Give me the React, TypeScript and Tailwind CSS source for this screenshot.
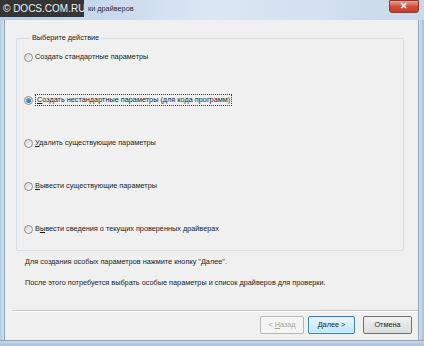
import React from "react";

function Radio({ checked }: { checked?: boolean }) {
  return (
    <span className="relative w-[9px] h-[9px] rounded-full border border-[#8e8f8f] bg-gradient-to-br from-[#d5d5d5] to-[#f8f8f8] flex items-center justify-center shrink-0">
      {checked && <span className="w-[5px] h-[5px] rounded-full bg-gradient-to-br from-[#7ab4d8] to-[#1f5f90]" />}
    </span>
  );
}

function Row({ checked, children }: { checked?: boolean; children: React.ReactNode }) {
  return (
    <div className="h-[12px] flex items-center gap-[2px]">
      <Radio checked={checked} />
      {checked ? (
        <span className="border border-dotted border-[#333] px-[1px] leading-[10px]">{children}</span>
      ) : (
        <span className="leading-[12px]">{children}</span>
      )}
    </div>
  );
}

export default function App() {
  return (
    <div
      className="w-[424px] h-[346px] flex flex-col bg-[#c6d6e8] text-[#1b1b1b] overflow-hidden"
      style={{ fontFamily: '"Liberation Sans", Arial, sans-serif' }}
    >
      {/* Title bar */}
      <div className="h-[20px] flex items-start bg-gradient-to-r from-[#b7cde5] via-[#dbe7f4] to-[#c9d9ea] shrink-0">
        <div className="w-[84px] h-[17px] bg-[#353535] text-[#f2f2f2] text-[10px] leading-[17px] pl-[3px] whitespace-nowrap overflow-hidden">
          © DOCS.COM.RU
        </div>
        <div className="text-[7.3px] leading-[18px] ml-[4px] text-[#1c2f45]">ки драйверов</div>
        <div className="flex-1" />
        <div className="w-[30px] h-[13px] mr-[5px] rounded-b-[3px] border border-[#8a3a32] bg-gradient-to-b from-[#e8a292] via-[#d0503e] to-[#c33d2a] flex items-center justify-center text-white text-[9px] font-bold leading-none">
          ✕
        </div>
      </div>

      <div className="flex flex-1">
        <div className="w-[5px] bg-gradient-to-r from-[#b8cbe0] to-[#d4e1ee] border-r border-[#8ea4bd]" />
        <div className="flex-1 bg-[#f0f0f0] flex flex-col text-[7.3px]">
          <fieldset className="ml-[11px] mr-[14px] mt-[13px] h-[218px] border border-[#d5dfe5] rounded-[2px] px-[8px]">
            <legend className="ml-[5px] px-[2px] leading-[10px]">Выберите действие</legend>
            <div className="flex flex-col gap-[31px] pt-[8px] -ml-[1px]">
              <Row>Создать стандартные параметры</Row>
              <Row checked>
                <u>С</u>оздать нестандартные параметры (для кода программ)
              </Row>
              <Row>
                <u>У</u>далить существующие параметры
              </Row>
              <Row>
                <u>В</u>ывести существующие параметры
              </Row>
              <Row>
                В<u>ы</u>вести сведения о текущих проверенных драйверах
              </Row>
            </div>
          </fieldset>
          <div className="ml-[20px] mt-[5px] leading-[12px]">Для создания особых параметров нажмите кнопку "Далее".</div>
          <div className="ml-[20px] mt-[9px] leading-[12px]">После этого потребуется выбрать особые параметры и список драйверов для проверки.</div>
          <div className="ml-[7px] mt-[21px] h-[1px] bg-[#c8c8c8] border-b border-white box-content" />
          <div className="flex justify-end mt-[4px] mr-[6px] gap-[4px]">
            <div className="w-[44px] h-[18px] rounded-[2px] border border-[#b5b8bb] bg-[#f4f4f4] text-[#a3a3a3] flex items-center justify-center">
              &lt; <u className="ml-[2px]">Н</u>азад
            </div>
            <div className="w-[47px] h-[18px] rounded-[2px] border border-[#3c7fb1] bg-gradient-to-b from-[#eaf6fd] to-[#bee6fd] shadow-[inset_0_0_0_1px_#d9f0fc] flex items-center justify-center">
              <u>Д</u>алее &gt;
            </div>
            <div className="w-[49px] h-[18px] ml-[4px] rounded-[2px] border border-[#707070] bg-gradient-to-b from-[#f2f2f2] to-[#dcdcdc] flex items-center justify-center">
              Отмена
            </div>
          </div>
        </div>
        <div className="w-[6px] bg-gradient-to-r from-[#d4e1ee] to-[#a9bfd8] border-l border-[#8ea4bd]" />
      </div>
      <div className="h-[6px] bg-gradient-to-b from-[#c9d8e8] to-[#a9bfd8] border-t border-[#8ea4bd] shrink-0" />
    </div>
  );
}
